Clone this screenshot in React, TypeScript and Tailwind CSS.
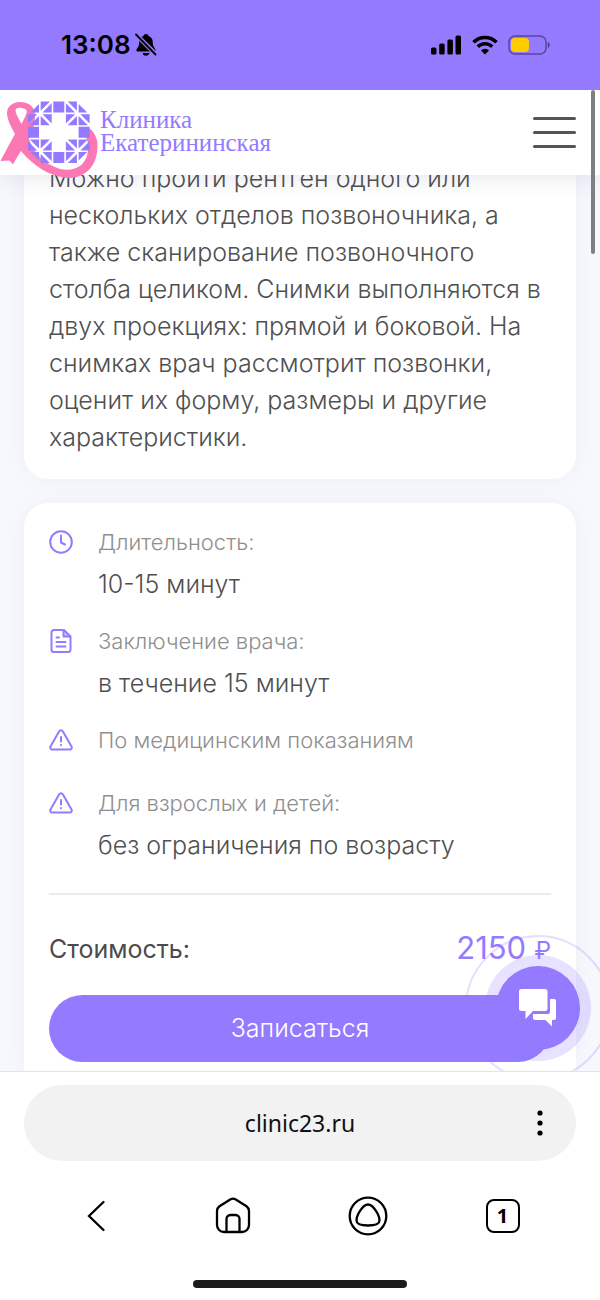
import React from "react";

const PINK = "#fb78b4";
const VIOLET = "#937aff";

function Tile({ x, y, lines }: { x: number; y: number; lines: string }) {
  return (
    <g transform={`translate(${x} ${y})`}>
      <path d={lines} />
    </g>
  );
}

const P = [0, 12.7, 25.3, 37.9, 50.6];

function Quadrant({ transform }: { transform: string }) {
  return (
    <g transform={transform}>
      <path d="M11 2.500V11H2.500Z" />
      <Tile x={P[1]} y={P[0]} lines="M0 0H9.2L0 9.2ZM11 1.8V11H1.8Z" />
      <Tile x={P[0]} y={P[1]} lines="M0 0H9.2L0 9.2ZM11 1.8V11H1.8Z" />
      <Tile x={P[1]} y={P[1]} lines="M1.8 0H11V9.2ZM0 1.8V11H9.2Z" />
    </g>
  );
}

function Logo() {
  return (
    <svg width="100" height="85" viewBox="0 0 100 85" className="shrink-0 overflow-visible" aria-hidden="true">
      <path
        fill={PINK}
        fillRule="evenodd"
        d="M20 12C28 12 35 16 35 25C35 33 33 40 29 49C33 62 44 74 60 79C74 82 87 76 88 60C89 52 86 46 82 42L89 38C96 43 99 52 97 62C95 78 84 88 68 88C48 86 34 76 21 61C18 66 15 70 13 74.500L9.500 70.500L0.500 71C5 62 10 53 15 44C11 37 7 29 7 23C7 16 13 12 20 12ZM16 19C15 21 16 23 17 25.500L21.500 34C24 29 27.500 23.500 26.500 20.500C25 17.500 18 17 16 19Z"
      />
      <g fill={VIOLET} transform="translate(28 11.500)">
        <Quadrant transform="" />
        <Quadrant transform="translate(61.6 0) scale(-1 1)" />
        <Quadrant transform="translate(0 61.6) scale(1 -1)" />
        <Quadrant transform="translate(61.6 61.6) scale(-1 -1)" />
        <path d="M25.3 0h11v11h-11zM25.3 50.6h11v11h-11zM0 25.3h11v11H0zM50.6 25.3h11v11h-11z" />
      </g>
    </svg>
  );
}

function StatusBar() {
  return (
    <div className="relative z-20 flex h-[90px] items-center justify-between bg-[#937aff] pr-[50px] pl-[61px] text-black">
      <div className="flex items-center gap-1">
        <span className="text-[26px] leading-8 font-semibold">13:08</span>
        <svg width="22" height="24" viewBox="0 0 22 24" aria-label="Без звука">
          <path d="M11 1c-1.400 0-2.300.9-2.500 2C5 4.200 4.200 7 4.200 10c0 4-2.800 5.500-2.800 7.500 0 .7.500 1 1.200 1h16.800c.7 0 1.200-.3 1.200-1 0-2-2.800-3.500-2.800-7.500 0-3-.8-5.800-4.300-7C13.300 1.900 12.400 1 11 1ZM7.500 20h7c-.5 1.800-1.700 2.800-3.500 2.800S8 21.800 7.500 20Z" />
          <path d="M0 .5 22 22.500" stroke={VIOLET} strokeWidth="4.500" />
          <path d="M1 1.500 20.500 21.500" stroke="#000" strokeWidth="1.800" strokeLinecap="round" />
        </svg>
      </div>
      <div className="flex items-center gap-2.5">
        <svg width="31" height="20" viewBox="0 0 31 20" aria-label="Сигнал">
          <rect x="0" y="12.500" width="5.500" height="7" rx="1.500" />
          <rect x="8.200" y="8.500" width="5.500" height="11" rx="1.500" />
          <rect x="16.400" y="4.500" width="5.500" height="15" rx="1.500" />
          <rect x="24.500" y="0.500" width="5.500" height="19" rx="1.500" />
        </svg>
        <svg width="26" height="20" viewBox="0 0 26 20" aria-label="Wi-Fi">
          <g fill="none" stroke="#000" strokeWidth="3.600">
            <path d="M1.500 7.200a16.300 16.300 0 0 1 23 0" />
            <path d="M5.800 11.700a10.200 10.200 0 0 1 14.400 0" />
          </g>
          <path d="M13 19.500 9 15.400a5.800 5.800 0 0 1 8 0Z" />
        </svg>
        <svg width="42" height="20" viewBox="0 0 42 20" aria-label="Заряд">
          <rect x="1" y="1" width="37" height="18" rx="6" fill="none" stroke="#000" strokeOpacity=".42" strokeWidth="1.500" />
          <rect x="3" y="3" width="18" height="14" rx="4" fill="#ffcc00" />
          <path d="M39.800 7v6c1.200-.5 1.900-1.600 1.900-3s-.7-2.500-1.900-3Z" fillOpacity=".5" />
        </svg>
      </div>
    </div>
  );
}

function ClockIcon() {
  return (
    <svg width="24" height="24" viewBox="0 0 24 24" fill="none" stroke={VIOLET} strokeWidth="2" strokeLinecap="round" strokeLinejoin="round">
      <circle cx="12" cy="12" r="10.800" />
      <path d="M12 5.500V12.500L16 14.500" />
    </svg>
  );
}

function DocIcon() {
  return (
    <svg width="24" height="24" viewBox="0 0 24 24" fill="none" stroke={VIOLET} strokeWidth="2" strokeLinecap="round" strokeLinejoin="round">
      <path d="M15 1H5a2.500 2.500 0 0 0-2.500 2.500v17A2.500 2.500 0 0 0 5 23h14a2.500 2.500 0 0 0 2.500-2.500v-13ZM14.500 1.500V7.500H21M7.500 8.500h2.500M7.500 13h9M7.500 17.500h9" />
      <path d="M15 1.500V7.500H21Z" fill={VIOLET} fillOpacity=".4" stroke="none" />
    </svg>
  );
}

function WarnIcon() {
  return (
    <svg width="24" height="24" viewBox="0 0 24 24" fill="none" stroke={VIOLET} strokeWidth="2" strokeLinecap="round" strokeLinejoin="round">
      <path d="M10.200 3.200 1.500 18.500A2 2 0 0 0 3.200 21.500H20.800A2 2 0 0 0 22.500 18.500L13.800 3.200A2.100 2.100 0 0 0 10.200 3.200ZM12 9v4.500M12 17v.2" />
    </svg>
  );
}

function Fact({ icon, label, value }: { icon: React.ReactNode; label: string; value?: string }) {
  return (
    <li className="flex min-h-10 gap-[25px]">
      <span className="flex h-8 shrink-0 items-center" aria-hidden="true">
        {icon}
      </span>
      <div>
        <p className="text-[22px] leading-8 font-light text-[#8f8f8f]">{label}</p>
        {value && <p className="mt-2 text-[25px] leading-9 font-light text-[#505050]">{value}</p>}
      </div>
    </li>
  );
}

export default function App() {
  return (
    <div className="flex min-h-screen flex-col bg-white font-['Inter','Noto_Sans',sans-serif]">
      <StatusBar />
      <header className="relative z-10 flex h-[85px] items-center justify-between bg-white pr-6 shadow-[0_2px_24px_rgba(60,60,100,0.12)]">
        <a href="#" className="flex items-center">
          <Logo />
          <span className="pb-1 font-['Liberation_Serif',serif] text-[25px] leading-[23px] text-[#937aff]">
            Клиника
            <br />
            Екатерининская
          </span>
        </a>
        <button aria-label="Меню" className="flex w-[43px] flex-col gap-[11px]">
          <span className="h-[3px] rounded-full bg-[#555]" />
          <span className="h-[3px] rounded-full bg-[#555]" />
          <span className="h-[3px] rounded-full bg-[#555]" />
        </button>
        <div className="absolute top-0 right-[5px] h-[164px] w-1 rounded-full bg-[#7f7f82]" />
      </header>

      <main className="relative flex flex-col gap-6 overflow-hidden bg-[#f7f8fd] px-6">
        <section className="-mt-[15px] rounded-b-3xl bg-white px-[25px] pb-[23px] text-[25px] leading-[37px] font-light text-[#505050] shadow-[0_0_24px_rgba(60,60,100,0.04)]">
          <p>
            Можно пройти рентген одного или
            <br />
            нескольких отделов позвоночника, а
            <br />
            также сканирование позвоночного
            <br />
            столба целиком. Снимки выполняются в
            <br />
            двух проекциях: прямой и боковой. На
            <br />
            снимках врач рассмотрит позвонки,
            <br />
            оценит их форму, размеры и другие
            <br />
            характеристики.
          </p>
        </section>

        <section className="rounded-t-3xl bg-white px-[25px] pt-[23px] pb-[9px] shadow-[0_0_24px_rgba(60,60,100,0.04)]">
          <ul className="flex flex-col gap-[23px]">
            <Fact icon={<ClockIcon />} label="Длительность:" value="10-15 минут" />
            <Fact icon={<DocIcon />} label="Заключение врача:" value="в течение 15 минут" />
            <Fact icon={<WarnIcon />} label="По медицинским показаниям" />
            <Fact icon={<WarnIcon />} label="Для взрослых и детей:" value="без ограничения по возрасту" />
          </ul>
          <div className="mt-[30px] flex h-[76px] items-end justify-between border-t-2 border-[#ececef]">
            <span className="text-[25px] leading-10 text-[#4b4b4b]">Стоимость:</span>
            <span className="flex items-baseline gap-2 text-[31px] leading-9 text-[#937aff]">
              2150 <span className="text-[24px]">₽</span>
            </span>
          </div>
          <button className="mt-[26px] h-[67px] w-full rounded-full bg-[#937aff] text-[25px] font-light text-white">
            Записаться
          </button>
        </section>

        <div className="absolute right-[-11px] bottom-[-10px] flex size-[146px] items-center justify-center rounded-full border-2 border-[#937aff]/25">
          <button aria-label="Чат" className="flex size-[84px] items-center justify-center rounded-full bg-[#937aff] shadow-[0_0_0_11px_rgba(147,122,255,0.22)]">
            <svg width="38" height="38" viewBox="0 0 38 38" fill="#fff">
              <path d="M2.500 0H26a2.500 2.500 0 0 1 2.500 2.500V19.500A2.500 2.500 0 0 1 26 22H14L6.500 30V22H2.500A2.500 2.500 0 0 1 0 19.500V2.500A2.500 2.500 0 0 1 2.500 0Z" />
              <path d="M31 10h4a2 2 0 0 1 2 2V29a2 2 0 0 1-2 2H33v6.500L26.500 31H16a2 2 0 0 1-2-2V25H29a2 2 0 0 0 2-2Z" />
            </svg>
          </button>
        </div>
      </main>

      <footer className="flex flex-1 flex-col border-t border-[#e4e4e8] bg-white px-6 pt-[13px]">
        <div className="flex h-[76px] items-center rounded-full bg-[#f2f2f2] pr-6 pl-[48px]">
          <button className="flex-1 font-['Noto_Sans',sans-serif] text-[23px] text-[#111]">clinic23.ru</button>
          <button aria-label="Ещё" className="flex w-6 justify-center">
            <svg width="6" height="26" viewBox="0 0 6 26">
              <circle cx="3" cy="3" r="2.600" />
              <circle cx="3" cy="13" r="2.600" />
              <circle cx="3" cy="23" r="2.600" />
            </svg>
          </button>
        </div>
        <nav className="mt-[31px] grid grid-cols-4 px-1.5">
          <button aria-label="Назад" className="flex h-12 items-center justify-center">
            <svg width="40" height="40" viewBox="0 0 40 40" fill="none" stroke="#000" strokeWidth="2.300" strokeLinecap="round">
              <path d="M25.500 6 11 20 25.500 34" />
            </svg>
          </button>
          <button aria-label="Домой" className="flex h-12 items-center justify-center">
            <svg width="40" height="40" viewBox="0 0 40 40" fill="none" stroke="#000" strokeWidth="2.300">
              <path d="M17.600 3.200 6.500 10.300A6 6 0 0 0 4 15V29A7 7 0 0 0 11 36H29A7 7 0 0 0 36 29V15A6 6 0 0 0 33.500 10.300L22.400 3.200A5 5 0 0 0 17.600 3.200ZM13.500 36V23A4 4 0 0 1 17.500 19H22.500A4 4 0 0 1 26.500 23V36" />
            </svg>
          </button>
          <button aria-label="Алиса" className="flex h-12 items-center justify-center">
            <svg width="40" height="40" viewBox="0 0 40 40" fill="none" stroke="#000" strokeWidth="2.300">
              <circle cx="20" cy="20" r="18.300" />
              <path d="M20 8.500C15 8.500 8.500 19 8.500 24.500C8.500 28 13 29.500 20 29.500S31.500 28 31.500 24.500C31.500 19 25 8.500 20 8.500Z" />
            </svg>
          </button>
          <button aria-label="Вкладки" className="flex h-12 items-center justify-center">
            <span className="flex size-[34px] items-center justify-center rounded-lg border-2 border-black font-['Noto_Sans',sans-serif] text-[20px] leading-none font-bold">
              1
            </span>
          </button>
        </nav>
        <div className="mx-auto mt-10 h-2 w-[214px] rounded-full bg-[#1b1b1b]" />
      </footer>
    </div>
  );
}
